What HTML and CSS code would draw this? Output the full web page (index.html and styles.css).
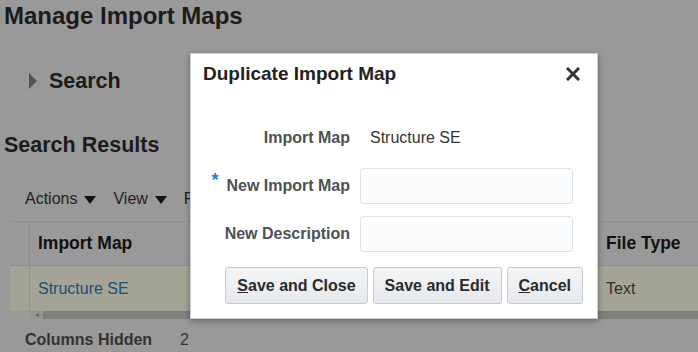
FILE: index.html
```html
<!DOCTYPE html>
<html lang="en">
<head>
<meta charset="UTF-8" />
<meta name="viewport" content="width=device-width, initial-scale=1" />
<title>Manage Import Maps</title>
<link rel="stylesheet" href="styles.css">
</head>
<body>
<div class="page">
  <h1>Manage Import Maps</h1>

  <div class="search-head">
    <span class="disclosure"></span>
    <h2>Search</h2>
  </div>

  <h2 class="results-title">Search Results</h2>

  <div class="toolbar">
    <span class="menu">Actions <span class="caret"></span></span>
    <span class="menu">View <span class="caret"></span></span>
    <span class="menu">Format <span class="caret"></span></span>
  </div>

  <div class="table">
    <div class="row head">
      <div class="cell sel"></div>
      <div class="cell">Import Map</div>
      <div class="cell">File Type</div>
    </div>
    <div class="row selected">
      <div class="cell sel"></div>
      <div class="cell"><a class="link">Structure SE</a></div>
      <div class="cell">Text</div>
    </div>
    <div class="hscroll">
      <span class="arrow">&#9666;</span>
      <span class="thumb"></span>
    </div>
  </div>

  <div class="hidden-info">
    <span class="hidden-label">Columns Hidden</span>
    <span>2</span>
  </div>
</div>

<!-- Duplicate dialog -->
<div class="dialog">
  <div class="dialog-head">
    <h3>Duplicate Import Map</h3>
    <svg class="close" width="14" height="14" viewBox="0 0 14 14">
      <path d="M2 2 L12 12 M12 2 L2 12" stroke="#333" stroke-width="3" stroke-linecap="square"/>
    </svg>
  </div>

  <div class="form">
    <div class="label">Import Map</div>
    <div class="value">Structure SE</div>

    <div class="label"><span class="req">*</span><span>New Import Map</span></div>
    <input class="field" type="text">

    <div class="label">New Description</div>
    <input class="field" type="text">
  </div>

  <div class="dialog-buttons">
    <button><u>S</u>ave and Close</button>
    <button>Save and Edit</button>
    <button><u>C</u>ancel</button>
  </div>
</div>
</body>
</html>
```

FILE: styles.css
```css
body {
  margin: 0;
  background: #999999;
  font-family: "Liberation Sans", Arial, sans-serif;
  color: #1c1c1c;
  overflow: hidden;
}
.page {
  height: 352px;
  position: relative;
}
h1 {
  margin: 0;
  padding: 2px 0 0 4px;
  font-size: 24px;
  line-height: 28px;
  font-weight: bold;
}

/* 搜索区 */
.search-head {
  display: flex;
  align-items: center;
  margin-top: 39px;
  padding-left: 29px;
}
.disclosure {
  width: 0;
  height: 0;
  border-top: 8px solid transparent;
  border-bottom: 8px solid transparent;
  border-left: 8px solid #555;
  margin-right: 12px;
}
.search-head h2 {
  margin: 0;
  font-size: 21.5px;
  line-height: 24px;
}
.results-title {
  margin: 40px 0 0 4px;
  font-size: 21.5px;
  line-height: 24px;
}

/* 工具栏 */
.toolbar {
  display: flex;
  gap: 17px;
  margin-top: 33px;
  padding-left: 25px;
  font-size: 16px;
  line-height: 18px;
  color: #222;
}
.menu {
  display: flex;
  align-items: center;
}
.caret {
  width: 0;
  height: 0;
  border-left: 6px solid transparent;
  border-right: 6px solid transparent;
  border-top: 8px solid #111;
  margin-left: 7px;
  margin-top: 2px;
}

/* 表格 */
.table {
  margin: 13px 0 0 10px;
  border-top: 1px solid #8a9097;
}
.row {
  display: grid;
  grid-template-columns: 20px 1fr 100px;
}
.row .cell {
  padding-left: 8px;
  display: flex;
  align-items: center;
  font-size: 16px;
}
.row .cell.sel {
  padding: 0;
  border-right: 1px solid #8a9097;
}
.row.head {
  height: 43px;
  border-bottom: 1px solid #8a9097;
  font-weight: bold;
  color: #111;
}
.row.head .cell {
  font-size: 17.5px;
}
.row.selected {
  height: 45px;
  background: #a3a495;
  color: #2e2e2e;
}
.link {
  color: #1e4d7c;
}
.hscroll {
  display: flex;
  align-items: center;
  height: 8px;
  margin-left: 21px;
  background: #949494;
}
.hscroll .arrow {
  width: 12px;
  font-size: 8px;
  line-height: 8px;
  color: #666;
  text-align: center;
}
.hscroll .thumb {
  flex: 1;
  height: 8px;
  background: #7e7e7e;
}
.hidden-info {
  display: flex;
  gap: 28px;
  margin-top: 12px;
  padding-left: 25px;
  font-size: 16px;
  color: #333;
}
.hidden-label {
  font-weight: bold;
}

/* 弹窗 */
.dialog {
  position: absolute;
  left: 190px;
  top: 53px;
  width: 408px;
  height: 266px;
  box-sizing: border-box;
  background: white;
  border: 1px solid #c9ced4;
  box-shadow: 0 2px 6px rgba(0,0,0,0.35);
}
.dialog-head {
  display: flex;
  justify-content: space-between;
  align-items: center;
  padding: 10px 17px 0 12px;
}
.dialog-head h3 {
  margin: 0;
  font-size: 19px;
  line-height: 20px;
  color: #222;
}
.form {
  display: grid;
  grid-template-columns: 159px 213px;
  grid-auto-rows: 36px;
  column-gap: 10px;
  row-gap: 12px;
  margin-top: 36px;
}
.form .label {
  display: flex;
  align-items: center;
  justify-content: flex-end;
  font-size: 16px;
  font-weight: bold;
  color: #4e5155;
}
.req {
  align-self: flex-start;
  margin-top: 5px;
  margin-right: 8px;
  color: #2b7ed6;
  font-size: 18px;
  line-height: 14px;
}
.form .value {
  display: flex;
  align-items: center;
  padding-left: 10px;
  font-size: 16px;
  color: #333;
}
.field {
  margin: 0;
  box-sizing: border-box;
  height: 36px;
  border: 1px solid #dde2e7;
  border-radius: 3px;
  background: #fbfcfd;
}
.dialog-buttons {
  display: flex;
  justify-content: flex-end;
  gap: 5px;
  margin-top: 15px;
  padding-right: 14px;
}
.dialog-buttons button {
  height: 37px;
  padding: 0 11px;
  font-family: inherit;
  font-size: 16px;
  font-weight: bold;
  color: #2a2a2a;
  background: linear-gradient(#f3f4f6, #e6e9ec);
  border: 1px solid #c3ccd5;
  border-radius: 3px;
}
```
